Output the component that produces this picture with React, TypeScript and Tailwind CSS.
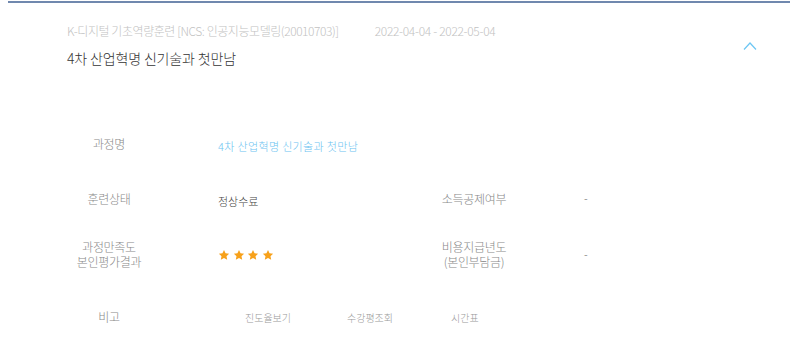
const Star = () => (
  <svg width="12" height="12" viewBox="0 0 24 24" className="fill-[#f7a11a]">
    <path d="M12 1.8l3.1 6.6 7.2.9-5.3 5 1.4 7.1L12 17.9l-6.4 3.5 1.4-7.1-5.3-5 7.2-.9z" />
  </svg>
);

const Row = ({
  h,
  label,
  value,
  label2,
  value2,
}: {
  h: string;
  label: React.ReactNode;
  value: React.ReactNode;
  label2?: React.ReactNode;
  value2?: React.ReactNode;
}) => (
  <div className={`flex items-center pl-[59px] ${h}`}>
    <div className="w-[100px] text-center text-[12px] leading-[15px] text-[#888]">{label}</div>
    <div className="w-[265px] pl-[59px]">{value}</div>
    {label2 && (
      <>
        <div className="w-[100px] text-center text-[12px] leading-[15px] text-[#888]">{label2}</div>
        <div className="pl-[60px] text-[11px] text-[#666]">{value2}</div>
      </>
    )}
  </div>
);

const App = () => {
  return (
    <div className="relative w-[800px] h-[342px] bg-white font-['Noto_Sans_CJK_KR','Noto_Sans',sans-serif] font-light">
      <div className="ml-[8px] mt-[1px] h-[2px] w-[782px] bg-[#7088ae]" />
      <div className="flex pl-[67px] pt-[19px] text-[12px] leading-[18px] text-[#c2c2c2]">
        <span className="tracking-[-0.44px]">K-디지털 기초역량훈련 [NCS: 인공지능모델링(20010703)]</span>
        <span className="ml-[36px] tracking-[-0.32px]">2022-04-04 - 2022-05-04</span>
      </div>
      <svg
        width="16"
        height="10"
        viewBox="0 0 16 10"
        className="absolute left-[742px] top-[40px] stroke-[#6cc6f3]"
        fill="none"
      >
        <path d="M2 8.5L8 2l6 6.5" strokeWidth="1.2" />
      </svg>
      <div className="mt-[8px] pl-[67px] text-[14px] leading-[20px] tracking-[-0.15px] text-[#333]">
        4차 산업혁명 신기술과 첫만남
      </div>

      <div className="mt-[48px] tracking-[-0.3px]">
        <Row
          h="h-[55px]"
          label="과정명"
          value={<span className="text-[11px] tracking-[0.35px] text-[#6cc3f0] whitespace-nowrap">4차 산업혁명 신기술과 첫만남</span>}
        />
        <Row
          h="h-[55px]"
          label="훈련상태"
          value={<span className="text-[11px] tracking-normal text-[#444]">정상수료</span>}
          label2="소득공제여부"
          value2="-"
        />
        <Row
          h="h-[56px]"
          label={
            <>
              과정만족도
              <br />
              본인평가결과
            </>
          }
          value={
            <div className="flex gap-[2.5px] pt-[1px]">
              <Star />
              <Star />
              <Star />
              <Star />
            </div>
          }
          label2={
            <>
              비용지급년도
              <br />
              (본인부담금)
            </>
          }
          value2="-"
        />
        <div className="flex h-[70px] items-center pl-[59px]">
          <div className="w-[100px] text-center text-[12px] text-[#888]">비고</div>
          <div className="flex pl-[86px] text-[10px] tracking-normal text-[#999]">
            <span className="w-[102px]">진도율보기</span>
            <span className="w-[104px]">수강평조회</span>
            <span>시간표</span>
          </div>
        </div>
      </div>
    </div>
  );
};

export default App;
